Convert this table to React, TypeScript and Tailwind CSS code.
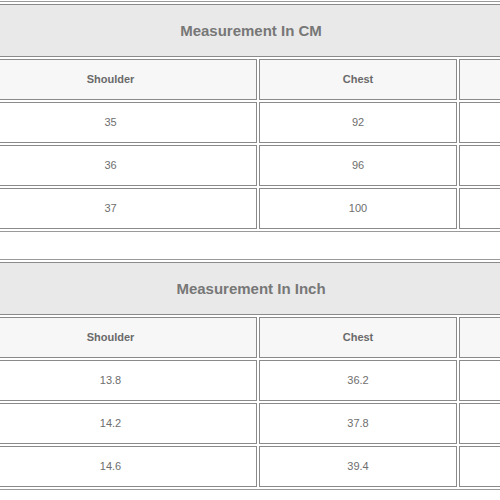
const cmRows = [
  ["35", "92"],
  ["36", "96"],
  ["37", "100"],
];

const inchRows = [
  ["13.8", "36.2"],
  ["14.2", "37.8"],
  ["14.6", "39.4"],
];

function SizeTable({ title, rows }: { title: string; rows: string[][] }) {
  return (
    <table className="ml-[-39px] w-[580px] max-w-none table-fixed border-separate border-spacing-[2px] border border-[#9a9a9a] text-center font-['Liberation_Sans',Arial,sans-serif]">
      <colgroup>
        <col className="w-[293px]" />
        <col className="w-[198px]" />
        <col className="w-[79px]" />
      </colgroup>
      <tbody>
        <tr>
          <td colSpan={3} className="h-[53px] p-0 pt-[2px] border border-[#8a8a8a] bg-[#e9e9e9] text-[15px] font-bold text-[#777777]">
            {title}
          </td>
        </tr>
        <tr>
          <td className="h-[41px] p-0 border border-[#8a8a8a] bg-[#f7f7f7] text-[11px] font-bold text-[#6a6a6a]">Shoulder</td>
          <td className="h-[41px] p-0 border border-[#8a8a8a] bg-[#f7f7f7] text-[11px] font-bold text-[#6a6a6a]">Chest</td>
          <td className="h-[41px] p-0 border border-[#8a8a8a] bg-[#f7f7f7]"></td>
        </tr>
        {rows.map((r, i) => (
          <tr key={i}>
            <td className="h-[41px] p-0 border border-[#8a8a8a] bg-white text-[11px] text-[#6e6e6e]">{r[0]}</td>
            <td className="h-[41px] p-0 border border-[#8a8a8a] bg-white text-[11px] text-[#6e6e6e]">{r[1]}</td>
            <td className="h-[41px] p-0 border border-[#8a8a8a] bg-white"></td>
          </tr>
        ))}
      </tbody>
    </table>
  );
}

export default function App() {
  return (
    <div className="w-[500px] h-[500px] overflow-hidden bg-white pt-[1px]">
      <SizeTable title="Measurement In CM" rows={cmRows} />
      <div className="mt-[27px]">
        <SizeTable title="Measurement In Inch" rows={inchRows} />
      </div>
    </div>
  );
}
